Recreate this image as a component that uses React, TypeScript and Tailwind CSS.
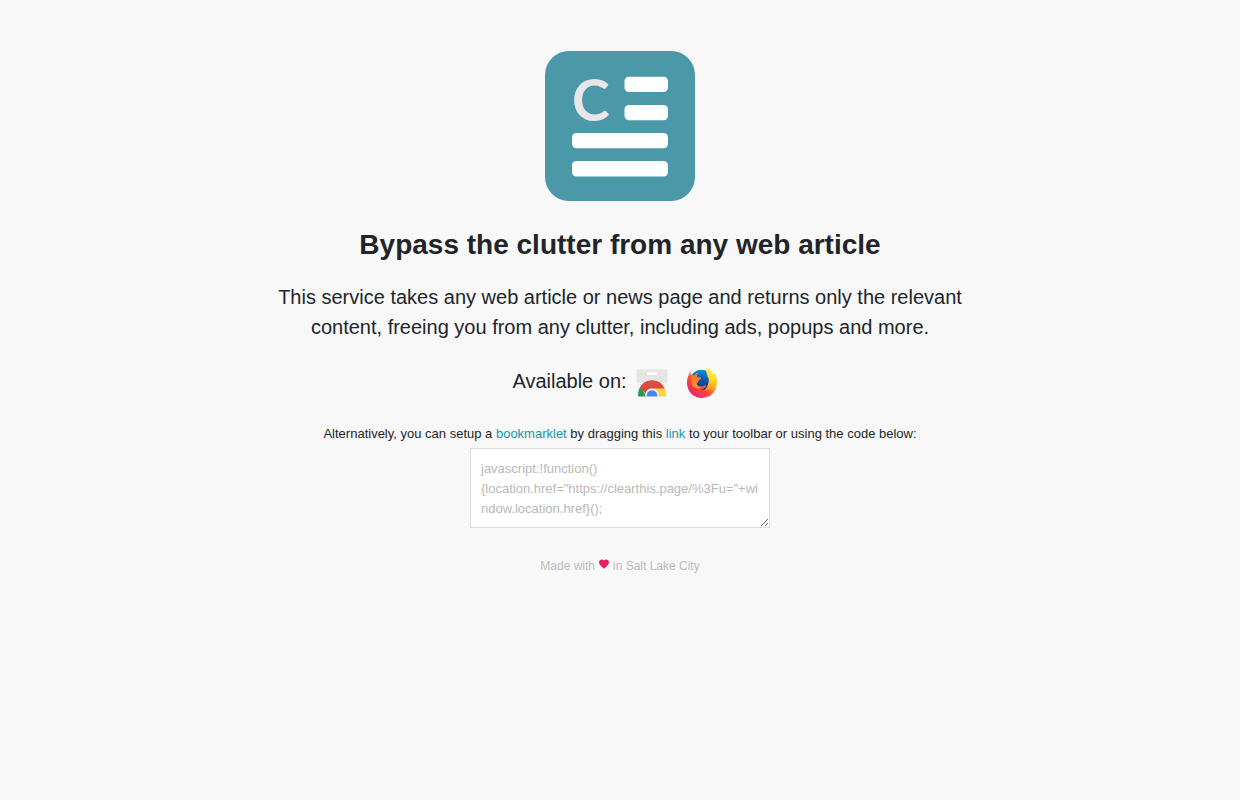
import React, { useState } from "react";

const BOOKMARKLET =
  'javascript:!function(){location.href="https://clearthis.page/%3Fu="+window.location.href}();';

const Logo = () => (
  <svg
    viewBox="0 0 150 150"
    className="size-[150px]"
    role="img"
    aria-label="Clear This Page"
  >
    <rect width="150" height="150" rx="24" fill="#4a98a8" />
    <text
      x="27"
      y="70"
      fill="#e8e6e8"
      fontFamily="Lato, sans-serif"
      fontSize="57"
      fontWeight="700"
    >
      C
    </text>
    <g fill="#fff">
      <rect x="79.5" y="25.7" width="43.5" height="15.3" rx="4.5" />
      <rect x="79.5" y="54" width="43.5" height="15.3" rx="4.5" />
      <rect x="27" y="82" width="96" height="15.3" rx="4.5" />
      <rect x="27" y="110" width="96" height="15.6" rx="4.5" />
    </g>
  </svg>
);

const ChromeStoreIcon = () => (
  <svg viewBox="0 0 32 32" className="size-8" aria-hidden="true">
    <path d="M0.5 2.5h31v12l-1 15h-29l-1-15z" fill="#f4f4f4" />
    <path d="M0.5 2.5h31v13h-31z" fill="#e5e5e5" />
    <rect x="11" y="5.3" width="10.5" height="2.8" rx="1.2" fill="#fff" />
    <path d="M2.2 29.5a13.8 13.8 0 0 1 2.4-10l6 10z" fill="#2a9d55" />
    <path d="M16 21h12.6a13.8 13.8 0 0 1 1.2 8.5H20z" fill="#fdd247" />
    <path
      d="M4 20.4A13.8 13.8 0 0 1 28.7 21.6H16a6.5 6.5 0 0 0-6.3 5z"
      fill="#dc4b3e"
    />
    <path d="M9.5 29.5a6.6 6.6 0 1 1 13 0z" fill="#f5f5f5" />
    <path d="M10.8 29.5a5.3 5.3 0 1 1 10.4 0z" fill="#4a86f0" />
  </svg>
);

const FirefoxIcon = () => (
  <svg viewBox="0 0 32 32" className="size-8" aria-hidden="true">
    <defs>
      <linearGradient id="flame" x1="0.85" y1="0.1" x2="0.2" y2="0.9">
        <stop offset="0.1" stopColor="#fff04a" />
        <stop offset="0.35" stopColor="#ffb32c" />
        <stop offset="0.6" stopColor="#ff512f" />
        <stop offset="1" stopColor="#f0206a" />
      </linearGradient>
      <linearGradient id="globe" x1="0.6" y1="0" x2="0.5" y2="1">
        <stop offset="0" stopColor="#0a93dc" />
        <stop offset="0.4" stopColor="#0a58b8" />
        <stop offset="1" stopColor="#2a1f6c" />
      </linearGradient>
      <linearGradient id="tail" x1="0.6" y1="0" x2="0.4" y2="1">
        <stop offset="0" stopColor="#fff24a" />
        <stop offset="0.5" stopColor="#ffd52e" />
        <stop offset="1" stopColor="#ff8a20" />
      </linearGradient>
      <linearGradient id="face" x1="0.3" y1="0" x2="0.6" y2="1">
        <stop offset="0" stopColor="#ff6a2a" />
        <stop offset="1" stopColor="#ff9a2a" />
      </linearGradient>
    </defs>
    <circle cx="15.5" cy="14.5" r="11.8" fill="url(#globe)" />
    <path
      d="M4.600 4.300c-.2 1.700.1 3 .8 4 1-.4 2.200-.5 3.300-.3.9-1 2.200-1.800 3.600-2.100-.9.900-1.600 2-1.700 3.200l.5 1.400 3.800.3c.2 1-.7 1.700-2.600 2.600l-.5 2.400-1.500-.4c.1 3.200 2.700 4.900 5.700 4 1.700-.6 2.700-1.500 4.200-.7-1 2.500-3.300 3.700-5.800 3.700 5 1.700 9.300-1.600 9.400-6.400.1-3.700-1.300-6.100-3.500-7.600 2.400.4 4.200 1.500 5.300 3.100C25.200 7 21.400 6.200 21.300 1.300c3.200 1.500 5.200 3.700 5.900 6.400.7-.3 1-.9 1-1.700 2 2.400 2.800 5.800 2.800 9.600C31 24.500 24.400 31 16 31S1 24.500 1 16c0-3.300.5-6 1.900-8.200.1-1.400.7-2.600 1.700-3.500z"
      fill="url(#flame)"
    />
    <path
      d="M5.400 8.300c1-.4 2.200-.5 3.300-.3.9-1 2.200-1.800 3.600-2.100-.9.900-1.600 2-1.700 3.200l.5 1.400 3.800.3c.2 1-.7 1.700-2.600 2.600l-.5 2.400-1.500-.4c.1 3.200 2.700 4.900 5.700 4-3 3.400-8.800 2.300-10.300-2.400-.8-2.900-1.200-5.800-.3-8.700z"
      fill="url(#face)"
    />
    <path
      d="M20.700 1c-1.300 4 .3 6 1.300 8.300 1.600 3.800.7 9.600-3.500 14.200 6.500-.1 11.500-2.500 12.400-8.500.1-4-1-7-2.700-9 0 .8-.3 1.400-1 1.700C26.200 4.600 23.700 2.400 20.700 1z"
      fill="url(#tail)"
    />
  </svg>
);

const HeartIcon = () => (
  <svg
    viewBox="0 0 24 24"
    className="mx-[3px] inline-block size-3 align-baseline"
    role="img"
    aria-label="love"
  >
    <path
      d="M12 21.400 10.500 20C5.400 15.400 2 12.300 2 8.500 2 5.400 4.400 3 7.500 3c1.700 0 3.400.8 4.500 2.100C13.100 3.800 14.800 3 16.500 3 19.600 3 22 5.400 22 8.500c0 3.800-3.400 6.900-8.500 11.500z"
      fill="#e91e63"
    />
  </svg>
);

const App = () => {
  const [code, setCode] = useState(BOOKMARKLET);

  return (
    <main className="flex min-h-screen flex-col items-center bg-[#f8f8f8] px-5 pt-[51px] pb-10 text-center font-['Liberation_Sans',Arial,sans-serif] text-[#212529]">
      <Logo />

      <h1 className="mt-7 text-[28px] leading-8 font-bold">
        Bypass the clutter from any web article
      </h1>

      <p className="mt-[21px] max-w-[700px] text-xl leading-[30px]">
        This service takes any web article or news page and returns only the
        relevant content, freeing you from any clutter, including ads, popups
        and more.
      </p>

      <div className="mt-6 flex items-start text-xl leading-[30px]">
        <span>Available on:</span>
        <a href="#chrome" aria-label="Chrome Web Store" className="mt-px ml-[9px]">
          <ChromeStoreIcon />
        </a>
        <a
          href="#firefox"
          aria-label="Firefox Add-ons"
          className="mt-px mr-[10px] ml-[18px]"
        >
          <FirefoxIcon />
        </a>
      </div>

      <label htmlFor="bookmarklet" className="mt-[25px] text-[13px] leading-5">
        Alternatively, you can setup a{" "}
        <a href="#bookmarklet" className="text-[#2196a6]">
          bookmarklet
        </a>{" "}
        by dragging this{" "}
        <a href="#link" className="text-[#2196a6]">
          link
        </a>{" "}
        to your toolbar or using the code below:
      </label>
      <textarea
        id="bookmarklet"
        value={code}
        onChange={(e) => setCode(e.target.value)}
        spellCheck={false}
        className="mt-1 h-20 w-[300px] resize overflow-hidden border border-[#dddddd] bg-white p-[10px] text-[13px] leading-5 text-[#b8b8b8]"
      />

      <footer className="mt-7 text-xs leading-5 text-[#bbbbbb]">
        Made with
        <HeartIcon />
        in Salt Lake City
      </footer>
    </main>
  );
};

export default App;
